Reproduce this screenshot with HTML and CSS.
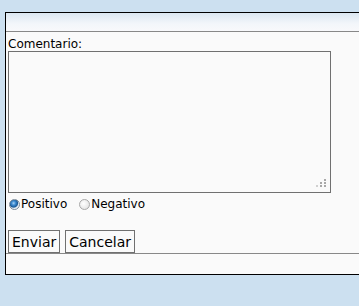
FILE: index.html
```html
<!DOCTYPE html>
<html lang="es">
<head>
  <meta charset="UTF-8">
  <title>Comentario</title>
  <link rel="stylesheet" href="styles.css">
</head>
<body>
  <div class="panel">
    <div class="panel-head"></div>
    <form class="panel-body">
      <label class="field-label" for="comentario">Comentario:</label>
      <div class="comment-wrap">
        <textarea id="comentario" class="comment-box"></textarea>
        <svg class="grip" width="12" height="10" viewBox="0 0 12 10">
          <rect x="8" y="0" width="2" height="2" fill="#a8a8a8"/>
          <rect x="4" y="3" width="2" height="2" fill="#a8a8a8"/>
          <rect x="8" y="3" width="2" height="2" fill="#a8a8a8"/>
          <rect x="0" y="6" width="2" height="2" fill="#d0d0d0"/>
          <rect x="4" y="6" width="2" height="2" fill="#a8a8a8"/>
          <rect x="8" y="6" width="2" height="2" fill="#a8a8a8"/>
        </svg>
      </div>
      <div class="radios">
        <label class="radio"><input type="radio" name="tipo" checked>Positivo</label>
        <label class="radio"><input type="radio" name="tipo">Negativo</label>
      </div>
      <div class="actions">
        <button type="button" class="btn">Enviar</button>
        <button type="button" class="btn">Cancelar</button>
      </div>
    </form>
    <div class="panel-foot"></div>
  </div>
</body>
</html>
```

FILE: styles.css
```css
body {
  margin: 0;
  padding: 12px 0 0 5px;
  background: #cce0f0;
  font-family: 'DejaVu Sans', Verdana, sans-serif;
  font-size: 12px;
  color: #000;
}
.panel {
  border: 1px solid #000;
  border-right: none;
  background: #fafafa;
}
.panel-head {
  height: 18px;
  background: linear-gradient(#dbe7f1, #f3f6fa 60%, #f8f9fb);
  border-bottom: 1px solid #888;
}
.panel-body {
  display: flex;
  flex-direction: column;
  align-items: flex-start;
  padding: 5px 0 0 2px;
  border-bottom: 1px solid #888;
}
.field-label {
  line-height: 14px;
}
.comment-wrap {
  position: relative;
  display: flex;
}
.comment-box {
  width: 321px;
  height: 140px;
  margin: 0;
  padding: 0;
  border: 1px solid #707070;
  background: #fafafa;
  resize: none;
}
.grip {
  position: absolute;
  right: 3px;
  bottom: 4px;
}
.radios {
  display: flex;
  gap: 11px;
  margin-top: 4px;
  line-height: 15px;
}
.radio {
  display: flex;
  align-items: center;
}
.radio input {
  appearance: none;
  width: 11px;
  height: 11px;
  margin: 0 1px;
  border-radius: 50%;
  border: 1px solid #a8a8a8;
  background: radial-gradient(circle at 40% 40%, #ffffff, #dcdcdc);
}
.radio input:checked {
  border-color: #7a8a99;
  background: radial-gradient(circle at 40% 35%, #a9d3f5 0, #3b8ad0 2px, #1c5a96 4px, #dfe9f2 5px, #f4f7fa 6px);
}
.actions {
  display: flex;
  gap: 5px;
  margin-top: 18px;
}
.btn {
  font-family: 'DejaVu Sans', Verdana, sans-serif;
  font-size: 14px;
  height: 23px;
  padding: 0 3px;
  border: 1px solid #707070;
  background: #fafafa;
  color: #000;
}
.panel-foot {
  height: 20px;
}
```
